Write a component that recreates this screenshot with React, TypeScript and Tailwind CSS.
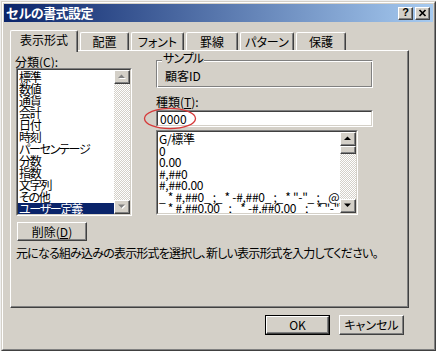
import React from "react";

const raised =
  "bg-[#d4d0c8] border border-t-white border-l-white border-r-[#404040] border-b-[#404040] shadow-[inset_-1px_-1px_#808080]";

function Arrow({ up, disabled }: { up: boolean; disabled?: boolean }) {
  const pts = up ? "0,4 7,4 3.5,0.5" : "0,0.5 7,0.5 3.5,4";
  return (
    <div className={`${raised} h-[14px] flex items-center justify-center shrink-0`}>
      <svg width="8" height="6" viewBox="0 0 8 6" className="overflow-visible">
        {disabled && <polygon points={pts} transform="translate(1,1)" fill="#ffffff" />}
        <polygon points={pts} fill={disabled ? "#808080" : "#000000"} />
      </svg>
    </div>
  );
}

function ScrollBar({ disabled, thumb }: { disabled?: boolean; thumb?: boolean }) {
  return (
    <div className="w-[16px] h-full flex flex-col shrink-0">
      <Arrow up disabled={disabled} />
      {thumb && <div className={`${raised} h-[8px] shrink-0`} />}
      <div className="flex-1 bg-[image:repeating-conic-gradient(#d4d0c8_0_25%,#ffffff_0_50%)] bg-[length:2px_2px]" />
      <Arrow up={false} disabled={disabled} />
    </div>
  );
}

function Sunken({ className, children }: { className: string; children?: React.ReactNode }) {
  return (
    <div className={`border border-t-[#808080] border-l-[#808080] border-r-white border-b-white ${className}`}>
      <div className="h-full w-full border border-t-[#404040] border-l-[#404040] border-r-[#d4d0c8] border-b-[#d4d0c8] bg-white flex overflow-hidden">
        {children}
      </div>
    </div>
  );
}

const cats = [
  "標準",
  "数値",
  "通貨",
  "会計",
  "日付",
  "時刻",
  "パーセンテージ",
  "分数",
  "指数",
  "文字列",
  "その他",
  "ユーザー定義",
];

const formats = [
  "G/標準",
  "0",
  "0.00",
  "#,##0",
  "#,##0.00",
  '_ * #,##0_ ;_ * -#,##0_ ;_ * "-"_ ;_ @_ ',
  '_ * #,##0.00_ ;_ * -#,##0.00_ ;_ * "-"??_ ;_ @_ ',
];

function Tab({ label, w, selected, first }: { label: string; w: string; selected?: boolean; first?: boolean }) {
  return (
    <div
      className={`${w} ${first ? "" : "ml-[2px]"} ${
        selected ? "h-[22px] mb-[-2px] relative z-10 pb-[3px]" : "h-[18px]"
      } bg-[#d4d0c8] border-t border-l border-r border-t-white border-l-white border-r-[#404040] rounded-t-[2px] shadow-[inset_-1px_0_#808080] flex items-center justify-center text-[12px] leading-[12px]`}
    >
      {label}
    </div>
  );
}

export default function App() {
  return (
    <div className="w-[436px] h-[351px] overflow-hidden bg-[#efefef] pl-[1px] pt-[1px] font-['Noto_Sans_CJK_JP',sans-serif] text-[12px] leading-[12px] text-black [font-feature-settings:'palt']">
      <div className="w-[435px] h-[350px] bg-[#d4d0c8] border border-t-[#d4d0c8] border-l-[#d4d0c8] border-r-[#404040] border-b-[#404040]">
        <div className="h-full border border-t-white border-l-white border-r-[#808080] border-b-[#808080] p-[1px] flex flex-col">
          {/* title bar */}
          <div className="h-[18px] shrink-0 flex items-center bg-[linear-gradient(to_right,#0a246a,#a6caf0)] pl-[2px] pr-[3px]">
            <span className="text-white font-bold text-[13px] leading-[14px] [font-feature-settings:normal] tracking-[-0.6px]">
              セルの書式設定
            </span>
            <div className="ml-auto flex gap-[2px]">
              <div className={`${raised} w-[15px] h-[13px] flex items-center justify-center`}>
                <span className="font-['Liberation_Sans',sans-serif] font-bold text-[11px] leading-[11px] mt-[-1px]">?</span>
              </div>
              <div className={`${raised} w-[15px] h-[13px] flex items-center justify-center`}>
                <svg width="9" height="8" viewBox="0 0 9 8">
                  <path d="M1.5 1 L7.5 7 M7.5 1 L1.5 7" stroke="#000" strokeWidth="1.7" fill="none" />
                </svg>
              </div>
            </div>
          </div>

          {/* tabs */}
          <div className="mt-[8px] ml-[6px] h-[20px] flex items-end shrink-0">
            <Tab label="表示形式" w="w-[68px]" selected first />
            <Tab label="配置" w="w-[49px]" />
            <Tab label="フォント" w="w-[53px]" />
            <Tab label="罫線" w="w-[52px]" />
            <Tab label="パターン" w="w-[54px]" />
            <Tab label="保護" w="w-[50px]" />
          </div>

          {/* panel */}
          <div className="ml-[6px] w-[399px] h-[258px] shrink-0 border border-t-white border-l-white border-r-[#404040] border-b-[#404040] shadow-[inset_-1px_-1px_#808080] flex flex-col pt-[5px] pl-[4px]">
            <div className="flex">
              {/* left column */}
              <div className="w-[117px] flex flex-col">
                <div className="h-[12px]">
                  分類(<span className="underline">C</span>):
                </div>
                <Sunken className="ml-[1px] w-[116px] h-[148px]">
                  <div className="flex-1 flex flex-col pt-[1px]">
                    {cats.map((c, i) => (
                      <div
                        key={c}
                        className={`h-[12px] leading-[12px] pl-[1px] whitespace-nowrap tracking-[-1.3px] ${
                          i === cats.length - 1 ? "bg-[#0a246a] text-white" : ""
                        }`}
                      >
                        {c}
                      </div>
                    ))}
                  </div>
                  <ScrollBar disabled />
                </Sunken>
              </div>

              {/* right column */}
              <div className="ml-[24px] mt-[4px] flex flex-col">
                <div className="relative w-[217px] h-[28px] border border-t-[#808080] border-l-[#808080] border-r-white border-b-white shadow-[inset_1px_1px_#fff,inset_-1px_-1px_#808080] pl-[8px] pt-[9px]">
                  <span className="absolute top-[-9px] left-[5px] px-[1px] bg-[#d4d0c8] leading-[12px] tracking-[-1px]">
                    サンプル
                  </span>
                  <div className="leading-[12px]">顧客ID</div>
                </div>
                <div className="mt-[8px] h-[12px]">
                  種類(<span className="underline">T</span>):
                </div>
                <div className="relative mt-[2px]">
                  <Sunken className="w-[217px] h-[17px]">
                    <div className="pl-[2px] flex items-center leading-[12px]">0000</div>
                  </Sunken>
                  <svg
                    className="absolute left-[-13px] top-[-3px] pointer-events-none"
                    width="54"
                    height="23"
                    viewBox="0 0 54 23"
                  >
                    <ellipse cx="27" cy="11.5" rx="25.5" ry="10.2" fill="none" stroke="#d63a3a" strokeWidth="1.3" />
                  </svg>
                </div>
                <Sunken className="mt-[3px] w-[202px] h-[85px]">
                  <div className="flex-1 min-w-0 flex flex-col pt-[1px] overflow-hidden">
                    {formats.map((f) => (
                      <div key={f} className="h-[11.5px] leading-[11.5px] pl-[1px] whitespace-pre shrink-0 tracking-[-0.3px]">
                        {f}
                      </div>
                    ))}
                  </div>
                  <ScrollBar thumb />
                </Sunken>
              </div>
            </div>

            <div className={`${raised} mt-[6px] ml-[2px] w-[70px] h-[19px] flex items-center justify-center`}>
              削除(<span className="underline">D</span>)
            </div>
            <div className="mt-[6px] ml-[1px] h-[12px] whitespace-nowrap tracking-[-0.8px]">
              元になる組み込みの表示形式を選択し、新しい表示形式を入力してください。
            </div>
          </div>

          {/* bottom buttons */}
          <div className="ml-[6px] w-[399px] mt-[7px] pr-[5px] flex justify-end gap-[9px]">
            <div className="w-[65px] h-[20px] border border-black">
              <div className={`${raised} w-full h-full flex items-center justify-center`}>OK</div>
            </div>
            <div className={`${raised} w-[65px] h-[20px] flex items-center justify-center`}>キャンセル</div>
          </div>
        </div>
      </div>
    </div>
  );
}
